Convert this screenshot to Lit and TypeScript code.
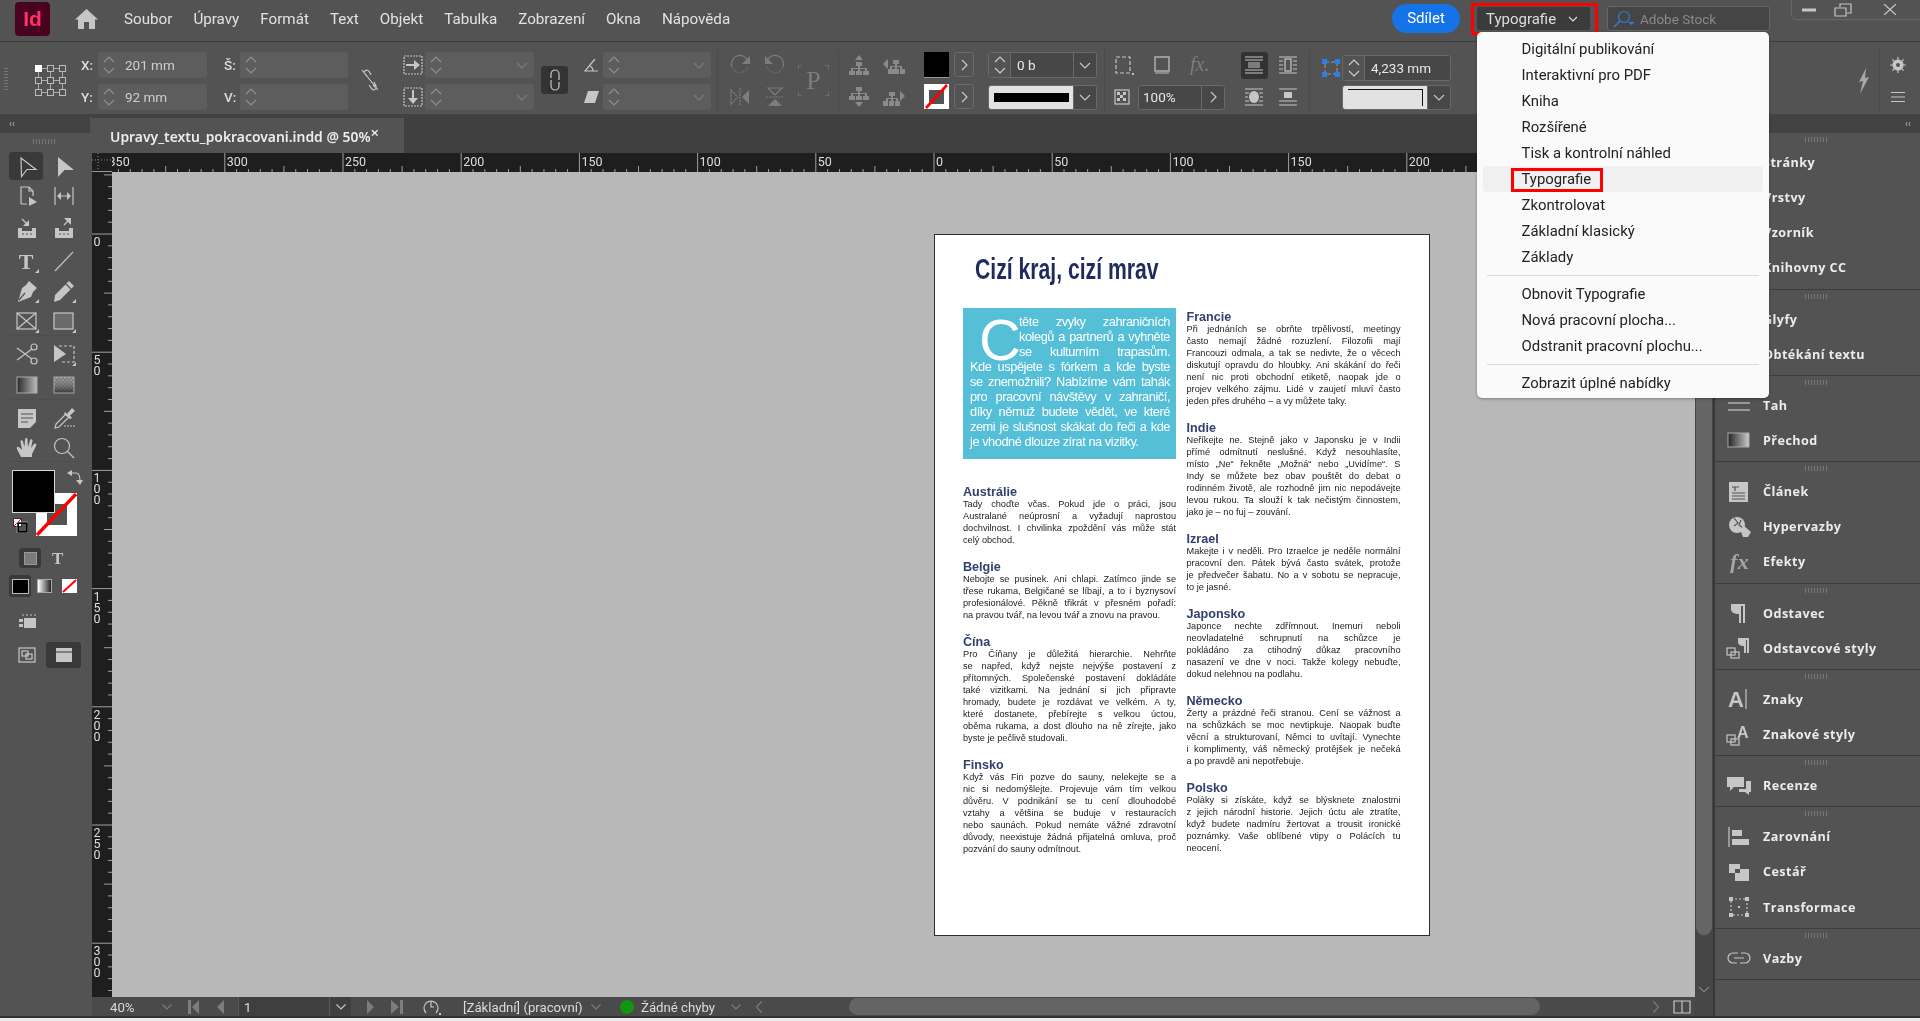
import { LitElement, css, html, svg, nothing } from 'lit';
import { customElement } from 'lit/decorators.js';

const ic = (w: number, h: number, body: unknown) =>
  html`<svg class="ic" width=${w} height=${h} viewBox="0 0 ${w} ${h}">${body}</svg>`;

const corner = svg`<path class="f" d="M24 20V24H20Z" />`;

// toolbox icons, all in a 24 box
const tools: Record<string, unknown> = {
  sel: svg`<path class="s" d="M6 3L21 14.5H12L6.5 21.5Z" />`,
  direct: svg`<path class="f" d="M6 2L22 15H12.5L6 22Z" />`,
  page: svg`<path class="s" d="M6 20V3H14L18 7V12M6 20H12M14 3V7H18" /><path class="f" d="M14 13L22 18L14 22Z" />`,
  gap: svg`<path class="s" stroke-width="2" d="M3 3V21M21 3V21M7 12H17" /><path class="f" d="M9 8L5 12L9 16ZM15 8L19 12L15 16Z" />`,
  collect: svg`<path class="f" d="M3 12H7V15H17V12H21V22H3Z" /><path class="s" stroke-width="2" d="M7 3L12 8" /><path class="f" d="M14 4V10H8Z" /><path class="d" d="M7 18H9M11 18H13M15 18H17" />`,
  place: svg`<path class="f" d="M3 12H7V15H17V12H21V22H3Z" /><path class="s" stroke-width="2" d="M12 9L17 4" /><path class="f" d="M12 2H19V9Z" /><path class="d" d="M7 18H9M11 18H13M15 18H17" />`,
  type: svg`<text class="f" x="11" y="20" text-anchor="middle" font-family="Liberation Serif" font-weight="700" font-size="22">T</text>${corner}`,
  line: svg`<path class="s" stroke-width="1.6" d="M3 22L21 3" />`,
  pen: svg`<path class="f" d="M14 2L22 9L18 13L16 18L3 23L7 9L11 6Z" /><path class="d" d="M4 21L10 14" />${corner}`,
  pencil: svg`<path class="f" d="M17 2L22 7L8 21L2 23L3 16Z" /><path class="d" d="M14 5L19 10" />${corner}`,
  frame: svg`<rect class="s" x="2" y="4" width="19" height="16" /><path class="s" d="M2 4L21 20M21 4L2 20" />${corner}`,
  rect: svg`<rect class="s g" x="2" y="4" width="19" height="16" />${corner}`,
  scissors: svg`<circle class="s" cx="19" cy="5" r="3" /><circle class="s" cx="19" cy="19" r="3" /><path class="s" stroke-width="1.6" d="M2 6L17 17M2 18L17 7" />`,
  free: svg`<path class="f" d="M2 3L14 12L2 20Z" /><path class="s" stroke-dasharray="3 2" d="M7 4H22V20H9" />${corner}`,
  grad: svg`<rect x="2" y="4" width="20" height="16" fill="url(#tg)" stroke="#aaa" />`,
  feather: svg`<rect x="2" y="4" width="20" height="16" fill="url(#tp)" /><rect x="2" y="4" width="20" height="16" fill="url(#tf)" stroke="#aaa" />`,
  note: svg`<path class="f" d="M3 3H21V16L15 22H3Z" /><path class="d" stroke-width="1.6" d="M6 8H18M6 12H18M6 16H13" />`,
  dropper: svg`<path class="s" d="M14 8L4 18L3 22L7 21L17 11" /><path class="f" d="M13 6L15 8L20 2L23 5L18 9.5L20 12L18 13L12 8Z" /><path class="s" stroke-dasharray="2 1" d="M12 20H24" stroke-width="3" />`,
  hand: svg`<path class="f" d="M6 21L2 13C1 11 3 10 4.5 11.5L7 14L5.5 6C5 4 7.5 3.5 8 5.5L9.5 11L10 3.5C10 1.5 12.5 1.5 12.5 3.5L13 11L15 4.5C15.5 2.5 18 3 17.5 5L16 12L19 8C20.5 6.5 22 8 21 10L17 18V21Z" />`,
  zoom: svg`<circle class="s" stroke-width="1.4" cx="10" cy="10" r="7.5" /><path class="s" stroke-width="2" d="M15.5 15.5L22 22" />`,
};

const toolRows: [string, string, boolean?][] = [
  ['sel', 'direct'],
  ['page', 'gap'],
  ['collect', 'place'],
  ['type', 'line'],
  ['pen', 'pencil'],
  ['frame', 'rect', true],
  ['scissors', 'free'],
  ['grad', 'feather', true],
  ['note', 'dropper'],
  ['hand', 'zoom', true],
];

const chevUp = svg`<path class="s" d="M1 6L6 1L11 6" />`;
const chevDown = svg`<path class="s" d="M1 1L6 6L11 1" />`;
const chevRight = svg`<path class="s" d="M1 1L6 6L1 11" />`;

const spinner = html`<span class="spin">${ic(12, 7, chevUp)}${ic(12, 7, chevDown)}</span>`;
const dropBtn = html`<span class="cbtn">${ic(12, 7, chevDown)}</span>`;
const arrowBtn = html`<span class="abtn">${ic(7, 12, chevRight)}</span>`;

const field = (value: string, drop = false) =>
  html`<span class="field">${spinner}<span class="val">${value}</span>${drop ? html`<span class="dim">${ic(12, 7, chevDown)}</span>` : nothing}</span>`;

const refBoxes = Array.from({ length: 9 }, (_, i) => i);

// dock rows; the top ones sit under the open menu, so they carry no glyph
const dock: { label: string; icon?: unknown }[][] = [
  [{ label: 'Stránky' }, { label: 'Vrstvy' }, { label: 'Vzorník' }, { label: 'Knihovny CC' }],
  [{ label: 'Glyfy' }, { label: 'Obtékání textu' }],
  [
    { label: 'Tah', icon: svg`<path class="s" stroke-width="1" d="M2 3H24" /><path class="s" stroke-width="2" d="M2 9H24" /><path class="s" stroke-width="3" d="M2 16H24" />` },
    { label: 'Přechod', icon: svg`<rect x="2" y="3" width="21" height="14" fill="url(#dg)" stroke="#aaa" />` },
  ],
  [
    { label: 'Článek', icon: svg`<rect class="f" x="3" y="1" width="19" height="20" /><path class="d" d="M6 6H13M9 6V10M6 12H19M6 15H19M6 18H19" />` },
    { label: 'Hypervazby', icon: svg`<circle class="f" cx="11" cy="9" r="8" /><path class="d" stroke-width="1.5" d="M8 2L12 7L8 10M15 4L13 9L17 12" /><path class="f" d="M14 13L18 10L25 16L22 21L17 21Z" />` },
    { label: 'Efekty', icon: svg`<text class="f dimf" x="4" y="18" font-family="Liberation Serif" font-style="italic" font-size="22">fx</text>` },
  ],
  [
    { label: 'Odstavec', icon: svg`<path class="f" d="M5 2H19V21H17V4H15V21H13V12C8 12 5 10 5 7Z" />` },
    { label: 'Odstavcové styly', icon: svg`<rect class="s" x="1" y="11" width="8" height="7" /><rect class="s" x="5" y="15" width="8" height="6" /><path class="f" d="M12 1H23V16H21V3H20V16H18V9C14 9 12 7 12 5Z" />` },
  ],
  [
    { label: 'Znaky', icon: svg`<text class="f" x="2" y="19" font-family="Liberation Sans" font-size="22">A</text><path class="s" d="M20 1V21" />` },
    { label: 'Znakové styly', icon: svg`<rect class="s" x="1" y="11" width="8" height="7" /><rect class="s" x="5" y="15" width="8" height="6" /><text class="f" x="11" y="14" font-family="Liberation Sans" font-size="16">A</text>` },
  ],
  [
    { label: 'Recenze', icon: svg`<path class="f" d="M1 2H18V12H8L4 16V12H1Z" /><path class="f" d="M20 6H25V17H23V20L19 17H13V14H20Z" />` },
  ],
  [
    { label: 'Zarovnání', icon: svg`<path class="s" d="M3 1V21" /><rect class="f" x="6" y="4" width="10" height="6" /><rect class="f" x="6" y="13" width="17" height="6" />` },
    { label: 'Cestář', icon: svg`<rect class="f" x="3" y="3" width="11" height="9" /><rect class="f" x="9" y="8" width="14" height="12" /><rect x="9" y="8" width="5" height="4" fill="#535353" />` },
    { label: 'Transformace', icon: svg`<path class="s" stroke-dasharray="2 2" d="M5 3H21V19H5Z" /><path class="f" d="M3 1H7V5H3ZM19 1H23V5H19ZM3 17H7V21H3ZM19 17H23V21H19ZM12 10H14V12H12Z" />` },
  ],
  [
    { label: 'Vazby', icon: svg`<path class="s" stroke-width="1.8" d="M12 6H7A5 5 0 0 0 7 16H11M14 16H19A5 5 0 0 0 19 6H15M8 11H18" />` },
  ],
];

const hTicks = Array.from({ length: 143 }, (_, i) => i - 72);
const vTicks = Array.from({ length: 70 }, (_, i) => i - 5);
const STEP = 11.82;

@customElement('doc-page')
export class DocPage extends LitElement {
  static styles = css`
    :host {
      display: block;
      width: 496px;
      height: 702px;
    }
    .page {
      box-sizing: border-box;
      width: 100%;
      height: 100%;
      background: #fff;
      border: 1px solid #2e2e2e;
      padding: 0 29px 0 28px;
      font-family: 'Liberation Sans', Arial, sans-serif;
      color: #1c1c1c;
    }
    .title {
      height: 73px;
      box-sizing: border-box;
      padding: 14px 0 0 12px;
    }
    .title span {
      display: inline-block;
      font-size: 29px;
      line-height: 40px;
      font-weight: 700;
      color: #1f2b5e;
      transform: scaleX(0.73);
      transform-origin: left center;
      white-space: nowrap;
    }
    .cols {
      display: grid;
      grid-template-columns: 213px 214px;
      column-gap: 10.5px;
    }
    .right {
      padding-top: 2px;
    }
    .box {
      height: 151px;
      box-sizing: border-box;
      background: #55bfd8;
      color: #fff;
      padding: 6px 6px 0 7px;
      font-size: 12.8px;
      letter-spacing: -0.45px;
      line-height: 15px;
      margin-bottom: 12px;
    }
    .cap {
      float: left;
      width: 49px;
      height: 45px;
      box-sizing: border-box;
      padding-left: 9px;
      font-size: 58px;
      letter-spacing: 0;
      line-height: 52px;
    }
    .ln {
      text-align: justify;
      text-align-last: justify;
      height: 15px;
    }
    .ln.end {
      text-align-last: left;
    }
    section {
      padding-top: 14px;
    }
    .right section:first-child {
      padding-top: 0;
    }
    h3 {
      margin: 0;
      font-size: 12.6px;
      line-height: 14px;
      height: 13px;
      font-weight: 700;
      color: #33406f;
    }
    p {
      margin: 0;
      font-size: 9.2px;
      line-height: 12px;
    }
    p div {
      height: 12px;
      text-align: justify;
      text-align-last: justify;
    }
    p div:last-child {
      text-align-last: left;
    }
  `;

  private section(title: string, lines: string[]) {
    return html`<section>
      <h3>${title}</h3>
      <p>${lines.map((l) => html`<div>${l}</div>`)}</p>
    </section>`;
  }

  render() {
    return html`<div class="page">
      <div class="title"><span>Cizí kraj, cizí mrav</span></div>
      <div class="cols">
        <div>
          <div class="box">
            <div class="cap">C</div>
            <div class="ln">tête zvyky zahraničních</div>
            <div class="ln">kolegů a partnerů a vyhněte</div>
            <div class="ln">se kulturním trapasům.</div>
            <div class="ln">Kde uspějete s fórkem a kde byste</div>
            <div class="ln">se znemožnili? Nabízíme vám tahák</div>
            <div class="ln">pro pracovní návštěvy v zahraničí,</div>
            <div class="ln">díky němuž budete vědět, ve které</div>
            <div class="ln">zemi je slušnost skákat do řeči a kde</div>
            <div class="ln end">je vhodné dlouze zírat na vizitky.</div>
          </div>
          ${this.section('Austrálie', [
            'Tady choďte včas. Pokud jde o práci, jsou',
            'Australané neúprosní a vyžadují naprostou',
            'dochvilnost. I chvilinka zpoždění vás může stát',
            'celý obchod.',
          ])}
          ${this.section('Belgie', [
            'Nebojte se pusinek. Ani chlapi. Zatímco jinde se',
            'třese rukama, Belgičané se líbají, a to i byznysoví',
            'profesionálové. Pěkně třikrát v přesném pořadí:',
            'na pravou tvář, na levou tvář a znovu na pravou.',
          ])}
          ${this.section('Čína', [
            'Pro Číňany je důležitá hierarchie. Nehrňte',
            'se napřed, když nejste nejvýše postavení z',
            'přítomných. Společenské postavení dokládáte',
            'také vizitkami. Na jednání si jich připravte',
            'hromady, budete je rozdávat ve velkém. A ty,',
            'které dostanete, přebírejte s velkou úctou,',
            'oběma rukama, a dost dlouho na ně zírejte, jako',
            'byste je pečlivě studovali.',
          ])}
          ${this.section('Finsko', [
            'Když vás Fin pozve do sauny, nelekejte se a',
            'nic si nedomýšlejte. Projevuje vám tím velkou',
            'důvěru. V podnikání se tu cení dlouhodobé',
            'vztahy a většina se buduje v restauracích',
            'nebo saunách. Pokud nemáte vážné zdravotní',
            'důvody, neexistuje žádná přijatelná omluva, proč',
            'pozvání do sauny odmítnout.',
          ])}
        </div>
        <div class="right">
          ${this.section('Francie', [
            'Při jednáních se obrňte trpělivostí, meetingy',
            'často nemají žádné rozuzlení. Filozofii mají',
            'Francouzi odmala, a tak se nedivte, že o věcech',
            'diskutují opravdu do hloubky. Ani skákání do řeči',
            'není nic proti obchodní etiketě, naopak jde o',
            'projev velkého zájmu. Lidé v zaujetí mluví často',
            'jeden přes druhého – a vy můžete taky.',
          ])}
          ${this.section('Indie', [
            'Neříkejte ne. Stejně jako v Japonsku je v Indii',
            'přímé odmítnutí neslušné. Když nesouhlasíte,',
            'místo „Ne“ řekněte „Možná“ nebo „Uvidíme“. S',
            'Indy se můžete bez obav pouštět do debat o',
            'rodinném životě, ale rozhodně jim nic nepodávejte',
            'levou rukou. Ta slouží k tak nečistým činnostem,',
            'jako je – no fuj – zouvání.',
          ])}
          ${this.section('Izrael', [
            'Makejte i v neděli. Pro Izraelce je neděle normální',
            'pracovní den. Pátek bývá často svátek, protože',
            'je předvečer šabatu. No a v sobotu se nepracuje,',
            'to je jasné.',
          ])}
          ${this.section('Japonsko', [
            'Japonce nechte zdřímnout. Inemuri neboli',
            'neovladatelné schrupnutí na schůzce je',
            'pokládáno za ctihodný důkaz pracovního',
            'nasazení ve dne v noci. Takže kolegy nebuďte,',
            'dokud nelehnou na podlahu.',
          ])}
          ${this.section('Německo', [
            'Žerty a prázdné řeči stranou. Cení se vážnost a',
            'na schůzkách se moc nevtipkuje. Naopak buďte',
            'věcní a strukturovaní, Němci to uvítají. Vynechte',
            'i komplimenty, váš německý protějšek je nečeká',
            'a po pravdě ani nepotřebuje.',
          ])}
          ${this.section('Polsko', [
            'Poláky si získáte, když se blýsknete znalostmi',
            'z jejich národní historie. Jejich úctu ale ztratíte,',
            'když budete nadmíru žertovat a trousit ironické',
            'poznámky. Vaše oblíbené vtipy o Polácích tu',
            'neocení.',
          ])}
        </div>
      </div>
    </div>`;
  }
}

@customElement('app-root')
export class AppRoot extends LitElement {
  static styles = css`
    :host {
      display: block;
      width: 1920px;
      height: 1021px;
      overflow: hidden;
      font-family: Roboto, 'Liberation Sans', sans-serif;
    }
    .app {
      position: relative;
      display: flex;
      flex-direction: column;
      height: 100%;
      background: #535353;
      color: #e4e4e4;
      filter: blur(0.3px);
    }
    .ic {
      display: block;
      flex: none;
      color: #c6c6c6;
    }
    .s {
      fill: none;
      stroke: currentColor;
      stroke-width: 1.2;
    }
    .f {
      fill: currentColor;
      stroke: none;
    }
    .d {
      fill: none;
      stroke: #535353;
      stroke-width: 1.2;
    }
    .g {
      fill: #6a6a6a;
    }
    .dimf {
      fill: #a6a6a6;
    }

    /* title bar */
    .titlebar {
      flex: none;
      height: 41px;
      display: flex;
      align-items: flex-start;
      border-bottom: 1px solid #3e3e3e;
    }
    .logo {
      margin: 2px 0 0 15px;
      width: 35px;
      height: 34px;
      box-sizing: border-box;
      border-radius: 4px;
      background: #49021f;
      color: #ff3366;
      font: 700 21px/33px 'Liberation Sans', sans-serif;
      text-align: center;
    }
    .home {
      margin: 9px 0 0 25px;
    }
    .menus {
      margin-left: 26px;
      display: flex;
      gap: 21px;
      font-size: 15.2px;
      line-height: 38px;
      color: #e2e2e2;
    }
    .share {
      margin: 4px 0 0 auto;
      width: 68px;
      height: 29px;
      border-radius: 15px;
      background: #1473e6;
      color: #fff;
      font-size: 15px;
      line-height: 29px;
      text-align: center;
    }
    .ws {
      position: relative;
      margin: 7px 0 0 17px;
      width: 113px;
      height: 23px;
      background: #3b3b3b;
      border-radius: 2px;
      display: flex;
      align-items: center;
      padding-left: 9px;
      box-sizing: border-box;
      font-size: 15px;
      color: #dedede;
    }
    .ws .ic {
      margin-left: 12px;
      color: #ddd;
    }
    .ws::after {
      content: '';
      position: absolute;
      left: -6px;
      top: -4px;
      width: 126.5px;
      height: 32px;
      box-sizing: border-box;
      border: 3px solid #f00;
    }
    .search {
      margin: 6px 0 0 17px;
      width: 163px;
      height: 25px;
      box-sizing: border-box;
      border: 1px solid #666;
      border-radius: 3px;
      background: #454545;
      display: flex;
      align-items: center;
      gap: 5px;
      padding-left: 5px;
      color: #8a8a8a;
      font-size: 13.5px;
    }
    .search .ic {
      color: #2d7fe0;
    }
    .win {
      margin-left: 21px;
      width: 129px;
      height: 20px;
      box-sizing: border-box;
      border: 1px solid #666;
      border-top: 0;
      border-right: 0;
      border-radius: 0 0 0 5px;
      display: grid;
      grid-template-columns: 34px 33px 62px;
      align-items: center;
      justify-items: center;
    }

    /* control bar */
    .ctl {
      flex: none;
      height: 72px;
      display: flex;
      align-items: flex-start;
      border-bottom: 3px solid #424242;
      font-size: 13.5px;
      position: relative;
    }
    .grip-v {
      width: 4px;
      height: 24px;
      margin: 26px 0 0 4px;
      background: repeating-linear-gradient(#777 0 1px, transparent 1px 3px);
    }
    .st {
      display: grid;
      grid-template-rows: 32px 32px;
      align-items: center;
      padding-top: 7px;
      justify-items: center;
    }
    .refpt {
      margin: 23px 0 0 27px;
      width: 31px;
      height: 31px;
      display: grid;
      grid-template-columns: repeat(3, 7px);
      grid-auto-rows: 7px;
      gap: 5px;
      background:
        linear-gradient(#aaa, #aaa) 0 3px / 100% 1px no-repeat,
        linear-gradient(#aaa, #aaa) 0 15px / 100% 1px no-repeat,
        linear-gradient(#aaa, #aaa) 0 27px / 100% 1px no-repeat,
        linear-gradient(#aaa, #aaa) 3px 0 / 1px 100% no-repeat,
        linear-gradient(#aaa, #aaa) 15px 0 / 1px 100% no-repeat,
        linear-gradient(#aaa, #aaa) 27px 0 / 1px 100% no-repeat;
    }
    .refpt i {
      box-sizing: border-box;
      border: 1px solid #bbb;
      background: #535353;
    }
    .refpt i.on {
      background: #fff;
      border-color: #fff;
    }
    .lab {
      color: #dcdcdc;
      justify-self: start;
      font-weight: 500;
    }
    .xy {
      margin-left: 15px;
      grid-template-columns: 17px 109px;
    }
    .wh {
      margin-left: 17px;
      grid-template-columns: 16px 108px;
    }
    .lnk {
      margin-left: 12px;
      width: 20px;
      padding-top: 26px;
      color: #bbb;
    }
    .scale {
      margin-left: 21px;
      grid-template-columns: 24px 109px;
    }
    .chain {
      margin: 24px 0 0 7px;
      width: 27px;
      height: 28px;
      background: #333;
      border-radius: 3px;
      display: grid;
      place-items: center;
    }
    .ang {
      margin-left: 12px;
      grid-template-columns: 23px 108px;
    }
    .sep {
      margin-top: 8px;
      width: 1px;
      height: 62px;
      background: #4a4a4a;
    }
    .s1 {
      margin-left: 6px;
    }
    .dim {
      color: #7d7d7d;
    }
    .dim .ic,
    .ic.dim {
      color: #7d7d7d;
    }
    .st2 {
      grid-template-columns: 35px 35px;
    }
    .rot {
      margin-left: 4px;
    }
    .pp {
      margin: 23px 0 0 6px;
    }
    .s2 {
      margin-left: 9px;
    }
    .aln {
      margin-left: 2px;
    }
    .aln .ic {
      color: #8a8a8a;
    }
    .sw {
      margin-left: 13px;
      grid-template-columns: 25px 25px;
      padding-top: 10px;
      justify-items: start;
      grid-template-rows: 32px 27px;
      align-items: start;
    }
    .fillsw {
      width: 25px;
      height: 26px;
      background: #000;
      border-bottom: 1px solid #999;
      box-sizing: border-box;
    }
    .none {
      display: block;
      width: 25px;
      height: 25px;
    }
    .abtn {
      margin-left: 5px;
      width: 20px;
      height: 25px;
      box-sizing: border-box;
      border: 1px solid #696969;
      border-radius: 3px;
      display: grid;
      place-items: center;
    }
    .strk {
      margin-left: 14px;
      grid-template-columns: 109px;
      grid-template-rows: 33px 26px;
      padding-top: 10px;
      align-items: start;
    }
    .field {
      width: 100%;
      height: 26px;
      display: flex;
      align-items: center;
      background: #5d5d5d;
      border-radius: 3px;
      color: #cfcfcf;
    }
    .spin {
      flex: none;
      width: 21px;
      height: 100%;
      display: flex;
      flex-direction: column;
      justify-content: center;
      align-items: center;
      gap: 4px;
    }
    .spin .ic {
      color: #8f8f8f;
    }
    .field .val {
      flex: 1;
      padding-left: 6px;
      white-space: nowrap;
    }
    .field .dim {
      margin-right: 6px;
    }
    .live {
      box-sizing: border-box;
      background: #474747;
      border: 1px solid #696969;
      color: #e8e8e8;
    }
    .live .spin {
      background: #535353;
      border-right: 1px solid #696969;
      border-radius: 3px 0 0 3px;
    }
    .live .spin .ic {
      color: #cfcfcf;
    }
    .cbtn {
      flex: none;
      width: 23px;
      height: 100%;
      box-sizing: border-box;
      border-left: 1px solid #696969;
      display: grid;
      place-items: center;
      background: #474747;
    }
    .style {
      width: 100%;
      height: 25px;
      display: flex;
      border-radius: 3px;
      border: 1px solid #696969;
      box-sizing: border-box;
      overflow: hidden;
    }
    .style b {
      flex: 1;
      display: grid;
      place-items: center;
      background: #e2e2e2;
    }
    .style b::before {
      content: '';
      width: 75px;
      height: 9px;
      background: #000;
    }
    .style .corner::before {
      width: 75px;
      height: 17px;
      box-sizing: border-box;
      background: none;
      border: solid #111;
      border-width: 1px 1px 0 0;
    }
    .s5 {
      margin-left: 7px;
    }
    .fxs {
      justify-items: start;
    }
    .fxrow {
      display: flex;
      align-items: center;
    }
    .cell {
      width: 38px;
      display: grid;
      place-items: center;
    }
    .cell.short {
      width: 33px;
    }
    .pct {
      width: 87px;
      height: 25px;
      box-sizing: border-box;
      display: flex;
      align-items: center;
      border: 1px solid #696969;
      border-radius: 3px;
      background: #474747;
      color: #e8e8e8;
      padding-left: 4px;
    }
    .pct span {
      flex: 1;
    }
    .pct em {
      font-style: normal;
      width: 22px;
      height: 100%;
      display: grid;
      place-items: center;
      border-left: 1px solid #696969;
    }
    .wrap {
      margin-left: 12px;
      grid-template-columns: 34px 34px;
    }
    .on-dark {
      width: 27px;
      height: 27px;
      background: #333;
      border-radius: 3px;
      display: grid;
      place-items: center;
    }
    .s3 {
      margin-left: 4px;
    }
    .cor {
      margin-left: 9px;
      grid-template-columns: 23px 109px;
      grid-template-rows: 33px 26px;
      padding-top: 9px;
    }
    .cor .style {
      grid-column: 2;
    }
    .bolt {
      margin: 26px 0 0 406px;
    }
    .bolt .ic {
      color: #a8a8a8;
    }
    .s4 {
      margin-left: 8px;
    }
    .gear {
      margin-left: 8px;
      width: 20px;
    }

    /* main */
    .main {
      flex: 1;
      min-height: 0;
      display: flex;
    }
    .left {
      flex: none;
      width: 90px;
      margin-right: 2px;
      display: flex;
      flex-direction: column;
      background: #535353;
    }
    .phead {
      flex: none;
      height: 16px;
      background: #424242;
      font-size: 10px;
      line-height: 14px;
      color: #b5b5b5;
      padding: 0 9px;
    }
    .grip {
      width: 24px;
      height: 5px;
      background: repeating-linear-gradient(90deg, #777 0 1px, transparent 1px 3px);
    }
    .toolbox {
      padding-top: 6px;
    }
    .toolbox .grip {
      margin: 0 auto;
    }
    .tools {
      margin-top: 8px;
      display: grid;
      grid-template-columns: 9px 36.5px 36.5px 8px;
      grid-template-rows: 29px 30px 34px 31px 30px 30px 35px 29px 35px 27px;
    }
    .tool {
      display: grid;
      place-items: center;
      position: relative;
    }
    .tool.l {
      grid-column: 2;
    }
    .tool.rs {
      border-bottom: 1px solid #4e4e4e;
    }
    .tool.active::before {
      content: '';
      position: absolute;
      left: 0;
      top: 0;
      width: 34px;
      height: 28px;
      background: #393939;
      border-radius: 3px;
    }
    .tool .ic {
      position: relative;
    }
    .swatches {
      position: relative;
      height: 82px;
    }
    .sfill {
      position: absolute;
      left: 12px;
      top: 8px;
      width: 43px;
      height: 43px;
      box-sizing: border-box;
      background: #000;
      border: 1px solid #d8d8d8;
      z-index: 1;
    }
    .sstroke {
      position: absolute;
      left: 36px;
      top: 31px;
    }
    .swap {
      position: absolute;
      left: 67px;
      top: 8px;
    }
    .deft {
      position: absolute;
      left: 13px;
      top: 56px;
    }
    .row {
      display: flex;
      align-items: center;
    }
    .row.a {
      height: 28px;
      padding-left: 19px;
    }
    .cont {
      width: 22px;
      height: 20px;
      background: #393939;
      border-radius: 3px;
      display: grid;
      place-items: center;
    }
    .cont::before {
      content: '';
      width: 11px;
      height: 11px;
      background: #7b7b7b;
      border: 1px solid #999;
    }
    .tglyph {
      margin-left: 11px;
      font: 700 17px/1 'Liberation Serif', serif;
      color: #c6c6c6;
    }
    .row.b {
      height: 28px;
      padding-left: 9px;
    }
    .mini {
      width: 22px;
      height: 22px;
      background: #393939;
      border-radius: 3px;
      display: grid;
      place-items: center;
    }
    .mini::before {
      content: '';
      width: 15px;
      height: 13px;
      background: #000;
      border: 1px solid #bbb;
    }
    .gradb {
      margin-left: 6px;
      width: 15px;
      height: 14px;
      box-sizing: border-box;
      border: 1px solid #aaa;
      background: linear-gradient(90deg, #fff, #222);
    }
    .noneb {
      margin-left: 10px;
    }
    .row.c {
      height: 26px;
      margin-top: 8px;
      padding-left: 17px;
    }
    .row.d {
      height: 26px;
      margin-top: 8px;
      padding-left: 17px;
    }
    .modes {
      position: relative;
      margin-left: 9px;
      width: 35px;
      height: 26px;
      background: #393939;
      border-radius: 3px;
      display: grid;
      place-items: center;
    }
    .center {
      flex: none;
      width: 1621px;
      display: flex;
      flex-direction: column;
      min-width: 0;
    }
    .tabs {
      flex: none;
      height: 36px;
      background: #404040;
      display: flex;
      align-items: flex-end;
    }
    .tab {
      width: 312px;
      height: 35px;
      box-sizing: border-box;
      background: #535353;
      padding-left: 18px;
      font: 600 13.9px/37px 'Noto Sans', sans-serif;
      color: #ececec;
      white-space: nowrap;
      display: flex;
    }
    .tab i {
      font-style: normal;
      font-size: 15px;
      line-height: 29px;
    }
    .hr {
      flex: none;
      display: block;
      height: 19px;
      background: #1e1e1e;
    }
    .body {
      flex: 1;
      min-height: 0;
      display: flex;
    }
    .vr {
      flex: none;
      display: block;
      width: 20px;
      background: #1e1e1e;
    }
    .canvas {
      flex: 1;
      min-width: 0;
      background: #b8b8b8;
      padding: 62px 0 0 822px;
      box-sizing: border-box;
      overflow: hidden;
    }
    .vscroll {
      flex: none;
      width: 18px;
      background: #464646;
      display: flex;
      flex-direction: column;
      align-items: center;
      padding: 0 1px 4px;
      box-sizing: border-box;
    }
    .thumbv {
      flex: 1;
      width: 16px;
      margin-bottom: 51px;
      background: #656565;
      border-radius: 0 0 8px 8px;
    }
    .hr-txt {
      font-family: Roboto, sans-serif;
      font-size: 12.5px;
      fill: #dedede;
    }
    .tk {
      stroke: #a0a0a0;
      stroke-width: 1;
    }
    .status {
      flex: none;
      height: 19px;
      background: #4a4a4a;
      display: grid;
      grid-template-columns: 66px 18px 36px 16px 10px 91px 22px 38px 16px 54px 130px 14px 38px 86px 18px 28px 1fr;
      align-items: center;
      font-size: 13.2px;
      color: #dcdcdc;
    }
    .status > span {
      display: grid;
      place-items: center;
      height: 100%;
      box-sizing: border-box;
      white-space: nowrap;
    }
    .status .txt {
      place-items: center start;
      padding-top: 2px;
    }
    .status .zoomv {
      padding-left: 18px;
    }
    .status .pagef {
      background: #3f3f3f;
      padding-left: 5px;
      border-left: 1px solid #5a5a5a;
    }
    .pageb {
      background: #3f3f3f;
      border-left: 1px solid #5a5a5a;
    }
    .status .pad {
      padding-left: 4px;
    }
    .status .dot {
      justify-items: end;
      padding-right: 7px;
    }
    .dot i {
      width: 14px;
      height: 14px;
      border-radius: 50%;
      background: #12960f;
    }
    .status .track {
      display: flex;
      align-items: center;
    }
    .thumbh {
      margin-left: 76px;
      width: 691px;
      height: 17px;
      background: #646464;
      border-radius: 9px;
    }
    .track .arr {
      margin-left: 113px;
    }
    .track .split {
      margin-left: 14px;
    }
    .track .hatch {
      margin-left: 4px;
      width: 18px;
      height: 19px;
      background: #474747;
    }

    /* dock */
    .dock {
      flex: none;
      width: 207px;
      box-sizing: border-box;
      border-left: 2px solid #383838;
      display: flex;
      flex-direction: column;
    }
    .dock .phead {
      text-align: right;
    }
    .group {
      position: relative;
      padding: 12px 0 3px;
      border-bottom: 1px solid #3d3d3d;
    }
    .dock .grip {
      position: absolute;
      left: 90px;
      top: 4px;
    }
    .item {
      height: 35.15px;
      display: flex;
      align-items: center;
      font: 700 12.6px 'Open Sans', sans-serif;
      letter-spacing: 0.45px;
      color: #ececec;
      white-space: nowrap;
    }
    .slot {
      width: 48px;
      display: grid;
      place-items: center;
      flex: none;
    }
    .foot {
      flex: none;
      height: 2px;
      background: #333;
    }
    .strip {
      flex: none;
      height: 3px;
      background: #e9e9e9;
    }

    /* workspace menu */
    .menu {
      position: absolute;
      left: 1477px;
      top: 32px;
      width: 292px;
      height: 366px;
      box-sizing: border-box;
      padding-top: 4px;
      background: #fafafa;
      border-radius: 5px;
      box-shadow: 0 1px 3px rgba(0, 0, 0, 0.3);
      color: #222;
      font-size: 14.9px;
    }
    .mi {
      height: 26px;
      line-height: 26px;
      padding-left: 44.5px;
    }
    .mi.hot {
      position: relative;
      margin: 0 6px;
      padding-left: 38.5px;
      background: #f0f0f0;
      border-radius: 4px;
    }
    .mi.hot::after {
      content: '';
      position: absolute;
      left: 28px;
      top: 2px;
      width: 92px;
      height: 24px;
      box-sizing: border-box;
      border: 3px solid #f00;
    }
    .msep {
      height: 11px;
      display: flex;
      align-items: center;
      padding: 0 10px;
    }
    .msep::before {
      content: '';
      flex: 1;
      height: 1px;
      background: #dcdcdc;
    }
  `;

  private hRuler() {
    const origin = 842;
    return html`<svg class="hr" width="1621" height="19" viewBox="0 0 1621 19">
      ${hTicks.map((i) => {
        const x = origin + i * STEP;
        if (x < 0) return nothing;
        const major = i % 10 === 0;
        const len = major ? 19 : i % 5 === 0 ? 6 : 3;
        return svg`<path class="tk" d="M${x} ${19 - len}V19" />${major
          ? svg`<text class="hr-txt" x=${x + 2} y="13">${Math.abs(i * 5)}</text>`
          : nothing}`;
      })}
      <rect width="20" height="19" fill="#1e1e1e" />
      <path stroke="#888" stroke-dasharray="1 2" d="M0 7H20M6 0V19" />
      <path stroke="#999" d="M0 18.5H20" />
    </svg>`;
  }

  private vRuler() {
    const origin = 62;
    return html`<svg class="vr" width="20" height="825" viewBox="0 0 20 825">
      ${vTicks.map((i) => {
        const y = origin + i * STEP;
        const major = i % 10 === 0;
        const len = major ? 20 : i % 5 === 0 ? 8 : 4;
        const digits = major ? String(Math.abs(i * 5)).split('') : [];
        return svg`<path class="tk" d="M${20 - len} ${y}H20" />${digits.map(
          (d, n) => svg`<text class="hr-txt" x="5" y=${y + 12 + n * 11} text-anchor="middle">${d}</text>`,
        )}`;
      })}
    </svg>`;
  }

  private toolbox() {
    return html`<div class="toolbox">
      <div class="grip"></div>
      <div class="tools">
        ${toolRows.map(
          ([a, b, sep], n) => html`
            <div class="tool l ${n === 0 ? 'active' : ''} ${sep ? 'rs' : ''}">
              ${ic(24, 24, tools[a])}
            </div>
            <div class="tool ${sep ? 'rs' : ''}">${ic(24, 24, tools[b])}</div>
          `,
        )}
      </div>
      <div class="swatches">
        <div class="sfill"></div>
        <svg class="sstroke" width="41" height="43" viewBox="0 0 41 43">
          <path fill="#fff" d="M0 0H41V43H0Z" />
          <rect x="11" y="11" width="20" height="21" fill="#535353" />
          <path stroke="#f00" stroke-width="3.4" d="M1 42L40 1" />
        </svg>
        <svg class="ic swap" width="16" height="16" viewBox="0 0 16 16">
          <path class="s" stroke-width="2" d="M3 3H9C12 3 13 6 13 11" />
          <path class="f" d="M5 0V6L0 3ZM9 10H16L13 15Z" />
        </svg>
        <svg class="deft" width="15" height="15" viewBox="0 0 15 15">
          <rect x="0.5" y="0.5" width="8" height="8" fill="#fff" stroke="#333" />
          <path stroke="#f00" d="M1 8L8 1" />
          <rect x="5" y="5" width="9" height="9" fill="none" stroke="#000" stroke-width="2" />
          <rect x="4" y="4" width="11" height="11" fill="none" stroke="#ccc" stroke-width="0.6" />
        </svg>
      </div>
      <div class="row a"><span class="cont"></span><span class="tglyph">T</span></div>
      <div class="row b">
        <span class="mini"></span><span class="gradb"></span>
        <svg class="noneb" width="15" height="14" viewBox="0 0 15 14">
          <rect width="15" height="14" fill="#fff" />
          <path stroke="#f00" stroke-width="2" d="M1 13L14 1" />
        </svg>
      </div>
      <div class="row c">
        ${ic(20, 20, svg`<path class="f" d="M2 8H6V11H2ZM2 13H6V16H2Z" /><rect class="f" x="7" y="7" width="12" height="10" /><path class="s" stroke-dasharray="2 2" d="M5 4H19" />`)}
      </div>
      <div class="row d">
        ${ic(20, 20, svg`<rect class="s" x="2" y="3" width="16" height="14" /><rect class="s" x="5" y="6" width="6" height="5" /><rect class="s" x="9" y="9" width="6" height="5" />`)}
        <span class="modes">
          ${ic(20, 20, svg`<rect class="f" x="2" y="3" width="16" height="14" /><path class="d" d="M2 7H18" />`)}
        </span>
      </div>
    </div>`;
  }

  private controlBar() {
    return html`<div class="ctl">
      <div class="grip-v"></div>
      <div class="refpt">${refBoxes.map((i) => html`<i class=${i === 0 ? 'on' : ''}></i>`)}</div>
      <div class="st xy">
        <span class="lab">X:</span>${field('201 mm')}
        <span class="lab">Y:</span>${field('92 mm')}
      </div>
      <div class="st wh">
        <span class="lab">Š:</span>${field('')}
        <span class="lab">V:</span>${field('')}
      </div>
      <div class="lnk">
        ${ic(20, 24, svg`<path class="s" stroke-width="1.6" d="M4 4C6 1 9 2 10 5L11 7M14 14L16 18C17 21 14 23 12 21L9 17M7 8L5 6M13 17L15 19M2 2L18 22" />`)}
      </div>
      <div class="st scale">
        ${ic(20, 20, svg`<rect class="s" x="1" y="1" width="18" height="18" stroke-dasharray="2 1" /><path class="f" d="M3 9H11V5L17 10L11 15V11H3Z" />`)}${field('', true)}
        ${ic(20, 20, svg`<rect class="s" x="1" y="1" width="18" height="18" stroke-dasharray="2 1" /><path class="f" d="M9 3H11V11H15L10 17L5 11H9Z" />`)}${field('', true)}
      </div>
      <div class="chain">
        ${ic(10, 22, svg`<path class="s" stroke-width="1.6" d="M1 9V5A4 4 0 0 1 9 5V11M9 13V17A4 4 0 0 1 1 17V11" />`)}
      </div>
      <div class="st ang">
        ${ic(15, 14, svg`<path class="s" stroke-width="1.4" d="M14 13H1L11 1" /><path class="s" d="M9 13C9 10 8 9 6 8" />`)}${field('', true)}
        ${ic(15, 14, svg`<path class="f" d="M4 1H15L11 13H0Z" />`)}${field('', true)}
      </div>
      <div class="sep s1"></div>
      <div class="st st2 rot dim">
        ${ic(24, 24, svg`<path class="s" stroke-width="1.5" d="M4 14A8.5 8.5 0 0 1 20 8" /><path class="s" stroke-dasharray="1 2" d="M20 14A8.5 8.5 0 0 1 4 14" /><path class="f" d="M22 3V11H14Z" />`)}
        ${ic(24, 24, svg`<path class="s" stroke-width="1.5" d="M20 14A8.5 8.5 0 0 0 4 8" /><path class="s" stroke-dasharray="1 2" d="M4 14A8.5 8.5 0 0 0 20 14" /><path class="f" d="M2 3V11H10Z" />`)}
        ${ic(24, 24, svg`<path class="s" d="M3 5L10 12L3 19ZM12 3V21" stroke-dasharray="2 1" /><path class="f" d="M21 5V19L14 12Z" />`)}
        ${ic(24, 24, svg`<path class="s" d="M5 3H19L12 10Z" /><path class="s" stroke-dasharray="2 1" d="M3 12H21" /><path class="f" d="M5 21H19L12 14Z" />`)}
      </div>
      <div class="pp">
        <svg class="ic dim" width="31" height="31" viewBox="0 0 31 31">
          <path class="s" d="M0 4V0H4M27 0H31V4M31 27V31H27M4 31H0V27" />
          <text class="f" x="15.5" y="24" text-anchor="middle" font-family="Liberation Serif" font-size="26">P</text>
        </svg>
      </div>
      <div class="sep s2"></div>
      <div class="st st2 aln">
        ${ic(22, 22, svg`<path class="f" d="M11 1L15 6H7ZM8 8H14V12H8ZM10 12H12V14H10ZM3 14H19V15H3ZM3 15H5V17H3ZM10 15H12V17H10ZM17 15H19V17H17ZM1 17H7V21H1ZM8 17H14V21H8ZM15 17H21V21H15Z" />`)}
        ${ic(24, 22, svg`<path class="f" d="M1 10L6 5V15ZM11 6H17V10H11ZM13 10H15V12H13ZM8 12H20V13H8ZM8 13H10V15H8ZM13 13H15V15H13ZM18 13H20V15H18ZM6 15H12V20H6ZM12 15H17V20H12ZM18 15H23V20H18Z" />`)}
        ${ic(22, 22, svg`<path class="f" d="M11 21L15 16H7ZM8 1H14V5H8ZM10 5H12V7H10ZM3 7H19V8H3ZM3 8H5V10H3ZM10 8H12V10H10ZM17 8H19V10H17ZM1 10H7V14H1ZM8 10H14V14H8ZM15 10H21V14H15Z" />`)}
        ${ic(24, 22, svg`<path class="f" d="M23 10L18 5V15ZM7 6H13V10H7ZM9 10H11V12H9ZM4 12H16V13H4ZM4 13H6V15H4ZM9 13H11V15H9ZM14 13H16V15H14ZM1 15H6V20H1ZM7 15H12V20H7ZM13 15H18V20H13Z" />`)}
      </div>
      <div class="st sw">
        <span class="fillsw"></span>${arrowBtn}
        <svg class="none" viewBox="0 0 25 25">
          <rect width="25" height="25" fill="#fff" />
          <rect x="5" y="6" width="15" height="14" fill="#535353" />
          <path stroke="#f00" stroke-width="2.6" d="M2 24L23 1" />
        </svg>
        ${arrowBtn}
      </div>
      <div class="st strk">
        <span class="field live">${spinner}<span class="val">0 b</span>${dropBtn}</span>
        <span class="style"><b></b>${dropBtn}</span>
      </div>
      <div class="sep s5"></div>
      <div class="st fxs">
        <div class="fxrow">
          <span class="cell">${ic(20, 20, svg`<path class="s" stroke-width="1.6" stroke-dasharray="4 2" d="M2 2H16V18H2Z" /><path class="f" d="M18 18H20V20H18Z" />`)}</span>
          <span class="cell">${ic(20, 20, svg`<rect class="s" stroke-width="1.6" x="3" y="2" width="14" height="14" /><path stroke="#888" stroke-width="2" d="M3 18H17" />`)}</span>
          <span class="cell"><svg class="ic dim" width="24" height="20" viewBox="0 0 24 20"><text class="f" x="2" y="16" font-family="Liberation Serif" font-style="italic" font-size="20">fx.</text></svg></span>
        </div>
        <div class="fxrow">
          <span class="cell short">${ic(16, 16, svg`<rect class="s" x="1" y="1" width="14" height="14" /><path class="f" d="M3 3H6V6H3ZM9 3H12V6H9ZM6 6H9V9H6ZM3 9H6V12H3ZM9 9H12V12H9Z" />`)}</span>
          <span class="pct"><span>100%</span><em>${ic(7, 12, chevRight)}</em></span>
        </div>
      </div>
      <div class="st wrap">
        <span class="on-dark">${ic(20, 20, svg`<path class="s" stroke-width="1.4" d="M1 2H19M1 5H19M1 15H19M1 18H19M4 8H16M4 10H16M4 12H16" />`)}</span>
        ${ic(20, 20, svg`<path class="s" d="M1 2H19M1 18H19M1 6H5M1 10H5M1 14H5M15 6H19M15 10H19M15 14H19" /><rect class="s" stroke-width="1.6" x="7" y="4" width="6" height="12" />`)}
        ${ic(20, 20, svg`<path class="s" d="M1 2H19M1 18H19M1 6H5M1 10H4M1 14H5M15 6H19M16 10H19M15 14H19" /><ellipse class="f" cx="10" cy="10" rx="5" ry="6" />`)}
        ${ic(20, 20, svg`<path class="s" stroke-width="1.5" d="M1 2H19M1 14H19M1 18H19" /><rect class="f" x="6" y="5" width="8" height="6" />`)}
      </div>
      <div class="sep s3"></div>
      <div class="st cor">
        <span>
          ${ic(18, 18, svg`<path stroke="#9a9a9a" stroke-dasharray="4 2" fill="none" d="M3 3H15V15H3Z" /><path fill="#2680eb" d="M0 0H5V5H0ZM13 0H18V5H13ZM0 13H5V18H0ZM13 13H18V18H13Z" />`)}
        </span>
        <span class="field live">${spinner}<span class="val">4,233 mm</span></span>
        <span class="style"><b class="corner"></b>${dropBtn}</span>
      </div>
      <div class="bolt">
        ${ic(14, 26, svg`<path class="f" d="M9 0L2 14L6 13L3 26L12 9L8 10Z" />`)}
      </div>
      <div class="sep s4"></div>
      <div class="st gear">
        ${ic(16, 16, svg`<path class="s" stroke-width="2.6" d="M8 0V16M0 8H16M2.3 2.3L13.7 13.7M2.3 13.7L13.7 2.3" /><circle class="f" cx="8" cy="8" r="5.6" /><circle cx="8" cy="8" r="2" fill="#535353" />`)}
        ${ic(16, 12, svg`<path class="s" stroke-width="1.6" d="M1 1.5H15M1 6H15M1 10.5H15" />`)}
      </div>
    </div>`;
  }

  private statusBar() {
    const dimChev = html`<span class="dim">${ic(10, 6, svg`<path class="s" d="M0.5 0.5L5 5L9.5 0.5" />`)}</span>`;
    return html`<div class="status">
      <span class="txt zoomv">40%</span>
      ${dimChev}
      <span class="dim">${ic(12, 14, svg`<path class="f" d="M0 0H3V14H0ZM11 0V14L4 7Z" />`)}</span>
      <span class="dim">${ic(7, 14, svg`<path class="f" d="M7 0V14L0 7Z" />`)}</span>
      <span></span>
      <span class="txt pagef">1</span>
      <span class="pageb">${ic(10, 6, svg`<path class="s" d="M0.5 0.5L5 5L9.5 0.5" />`)}</span>
      <span class="dim">${ic(7, 14, svg`<path class="f" d="M0 0V14L7 7Z" />`)}</span>
      <span class="dim">${ic(12, 14, svg`<path class="f" d="M0 0V14L8 7ZM9 0H12V14H9Z" />`)}</span>
      <span>${ic(20, 18, svg`<path class="s" stroke-width="2.4" d="M4 15A7 7 0 1 1 14 15" /><path class="s" stroke-width="1.6" d="M9 3V9H12" /><path class="f" d="M17 15H19V17H17Z" />`)}</span>
      <span class="txt pad">[Základní] (pracovní)</span>
      ${dimChev}
      <span class="dot"><i></i></span>
      <span class="txt">Žádné chyby</span>
      ${dimChev}
      <span class="dim">${ic(6, 12, svg`<path class="s" d="M5.5 0.5L0.5 6L5.5 11.5" />`)}</span>
      <span class="track">
        <span class="thumbh"></span>
        <span class="arr dim">${ic(6, 12, svg`<path class="s" d="M0.5 0.5L5.5 6L0.5 11.5" />`)}</span>
        <span class="split">${ic(18, 14, svg`<path class="s" stroke-width="1.6" d="M1 1H17V13H1ZM9 1V13" />`)}</span>
        <span class="hatch"></span>
      </span>
    </div>`;
  }

  render() {
    return html`<div class="app">
      <svg width="0" height="0" style="position:absolute">
        <defs>
          <linearGradient id="tg"><stop offset="0" stop-color="#2a2a2a" /><stop offset="1" stop-color="#bbb" /></linearGradient>
          <linearGradient id="dg"><stop offset="0" stop-color="#222" /><stop offset="1" stop-color="#ccc" /></linearGradient>
          <linearGradient id="tf" x2="0" y2="1"><stop offset="0" stop-color="#999" stop-opacity="0.1" /><stop offset="1" stop-color="#333" /></linearGradient>
          <pattern id="tp" width="4" height="4" patternUnits="userSpaceOnUse">
            <rect width="4" height="4" fill="#777" /><rect width="2" height="2" fill="#999" /><rect x="2" y="2" width="2" height="2" fill="#999" />
          </pattern>
        </defs>
      </svg>

      <div class="titlebar">
        <div class="logo">Id</div>
        <div class="home">
          ${ic(23, 20, svg`<path class="f" d="M11.5 0L23 10.5H20V20H14V13H9V20H3V10.5H0Z" />`)}
        </div>
        <div class="menus">
          ${['Soubor', 'Úpravy', 'Formát', 'Text', 'Objekt', 'Tabulka', 'Zobrazení', 'Okna', 'Nápověda'].map(
            (m) => html`<span>${m}</span>`,
          )}
        </div>
        <div class="share">Sdílet</div>
        <div class="ws">Typografie ${ic(10, 6, svg`<path class="s" stroke-width="1.6" d="M1 1L5 5L9 1" />`)}</div>
        <div class="search">
          ${ic(22, 18, svg`<circle class="s" stroke-width="1.6" cx="11" cy="7" r="5.5" /><path class="s" stroke-width="1.8" d="M7 11L1 17" /><path class="f" d="M15 12H22L18.5 15Z" />`)}
          <span>Adobe Stock</span>
        </div>
        <div class="win">
          ${ic(14, 4, svg`<rect class="f" width="14" height="3" y="0.5" />`)}
          ${ic(18, 14, svg`<path class="s" stroke-width="2" d="M6 4V1H17V10H13M1 5H12V13H1Z" />`)}
          ${ic(14, 11, svg`<path class="s" stroke-width="2.4" d="M1 0L13 11M13 0L1 11" />`)}
        </div>
      </div>

      ${this.controlBar()}

      <div class="main">
        <div class="left">
          <div class="phead">‹‹</div>
          ${this.toolbox()}
        </div>
        <div class="center">
          <div class="tabs">
            <div class="tab">Upravy_textu_pokracovani.indd @ 50%<i>×</i></div>
          </div>
          ${this.hRuler()}
          <div class="body">
            ${this.vRuler()}
            <div class="canvas"><doc-page></doc-page></div>
            <div class="vscroll">
              <div class="thumbv"></div>
              <span class="dim">${ic(12, 7, chevDown)}</span>
            </div>
          </div>
          ${this.statusBar()}
        </div>
        <div class="dock">
          <div class="phead">‹‹</div>
          ${dock.map(
            (items) => html`<div class="group">
              <div class="grip"></div>
              ${items.map(
                (it) => html`<div class="item">
                  <span class="slot">${it.icon ? ic(26, 22, it.icon) : nothing}</span>${it.label}
                </div>`,
              )}
            </div>`,
          )}
        </div>
      </div>
      <div class="foot"></div>
      <div class="strip"></div>

      <div class="menu">
        ${['Digitální publikování', 'Interaktivní pro PDF', 'Kniha', 'Rozšířené', 'Tisk a kontrolní náhled'].map(
          (m) => html`<div class="mi">${m}</div>`,
        )}
        <div class="mi hot">Typografie</div>
        ${['Zkontrolovat', 'Základní klasický', 'Základy'].map((m) => html`<div class="mi">${m}</div>`)}
        <div class="msep"></div>
        ${['Obnovit Typografie', 'Nová pracovní plocha...', 'Odstranit pracovní plochu...'].map(
          (m) => html`<div class="mi">${m}</div>`,
        )}
        <div class="msep"></div>
        <div class="mi">Zobrazit úplné nabídky</div>
      </div>
    </div>`;
  }
}
